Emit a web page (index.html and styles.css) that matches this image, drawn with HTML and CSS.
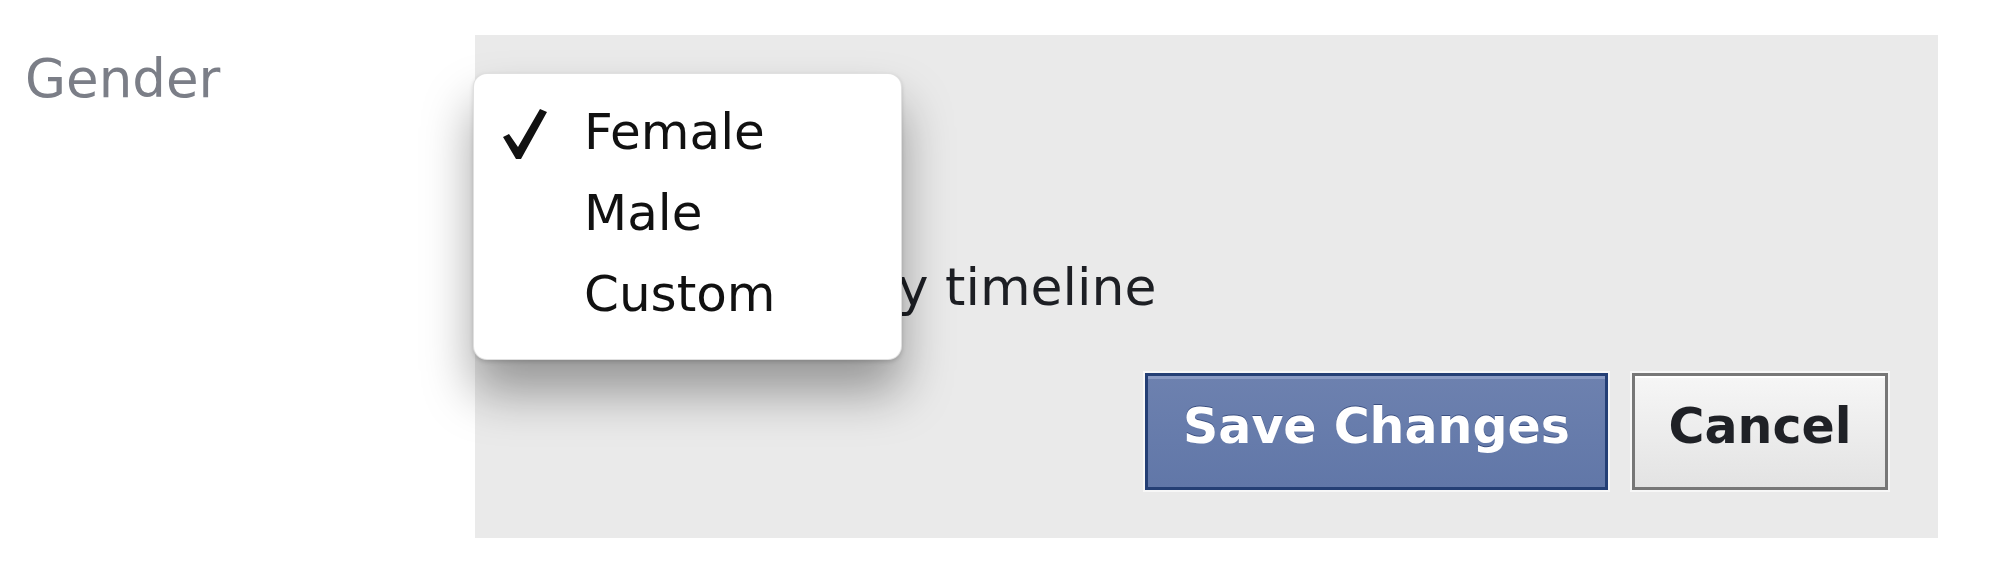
FILE: index.html
```html
<!DOCTYPE html>
<html lang="en">
<head>
<meta charset="utf-8">
<title>Gender</title>
<link rel="stylesheet" href="styles.css">
</head>
<body>
<div class="row">
  <div class="label">Gender</div>
  <div class="panel">
    <div class="select">
      <span class="select-arrows">
        <svg width="14" height="34" viewBox="0 0 14 34"><path d="M7 2 L13 12 L1 12 Z M7 32 L13 22 L1 22 Z" fill="#555"/></svg>
      </span>
    </div>
    <label class="check-row"><span class="checkbox"></span>Show on my timeline</label>
    <div class="actions">
      <button class="btn btn-primary">Save Changes</button>
      <button class="btn btn-default">Cancel</button>
    </div>

    <div class="menu">
      <div class="menu-item selected">
        <span class="tick">
          <svg width="44" height="50" viewBox="0 0 44 50"><path d="M0 28 L6 25 L15 38 L37 0 L44 3 L18 50 L13 50 Z" fill="#111"/></svg>
        </span>Female
      </div>
      <div class="menu-item"><span class="tick"></span>Male</div>
      <div class="menu-item"><span class="tick"></span>Custom</div>
    </div>
  </div>
</div>
</body>
</html>
```

FILE: styles.css
```css
html, body {
  margin: 0;
  padding: 0;
  background: #ffffff;
}

body {
  font-family: "DejaVu Sans", "Liberation Sans", sans-serif;
  width: 2000px;
  height: 571px;
  overflow: hidden;
}

.row {
  display: flex;
  align-items: flex-start;
  padding-top: 35px;
}

.label {
  width: 475px;
  box-sizing: border-box;
  padding-left: 25px;
  padding-top: 14px;
  font-size: 53px;
  line-height: 60px;
  color: #7b7e87;
}

.panel {
  position: relative;
  width: 1463px;
  box-sizing: border-box;
  background: #eaeaea;
  display: flex;
  flex-direction: column;
  padding: 45px 50px 48px 30px;
}

.select {
  width: 370px;
  height: 90px;
  box-sizing: border-box;
  border: 1px solid #a9a9a9;
  border-radius: 8px;
  background: linear-gradient(#ffffff, #ececec);
  display: flex;
  align-items: center;
  justify-content: flex-end;
  padding: 0 26px 0 30px;
}

.select-arrows {
  display: flex;
}

.check-row {
  margin-top: 87px;
  display: flex;
  align-items: center;
  gap: 22px;
  font-size: 52px;
  line-height: 60px;
  color: #1d1f24;
  padding-left: 50px;
}

.checkbox {
  width: 30px;
  height: 30px;
  border: 1px solid #888;
  border-radius: 4px;
  background: #fff;
}

.actions {
  margin-top: 56px;
  display: flex;
  justify-content: flex-end;
  gap: 24px;
}

.btn {
  height: 117px;
  box-sizing: border-box;
  font-family: "DejaVu Sans", "Liberation Sans", sans-serif;
  font-weight: bold;
  font-size: 49px;
  line-height: 100px;
  padding: 0 0 9px 0;
  border-width: 3px;
  border-style: solid;
  border-radius: 0;
  cursor: pointer;
}

.btn-primary {
  width: 463px;
  color: #ffffff;
  background: linear-gradient(#6d81af, #6177a8);
  border-color: #243f75;
  box-shadow: 0 0 0 2px #f7f7f7, inset 0 3px 0 #8a9bc4;
  text-shadow: 0 -1px 0 #3b4f80;
}

.btn-default {
  width: 256px;
  color: #1f2126;
  background: linear-gradient(#f6f6f6, #e3e3e3);
  border-color: #777777;
  box-shadow: 0 0 0 2px #f7f7f7, inset 0 2px 0 #ffffff;
}

.menu {
  position: absolute;
  left: -2px;
  top: 38px;
  width: 429px;
  height: 287px;
  box-sizing: border-box;
  background: #ffffff;
  border-radius: 14px;
  border: 1px solid rgba(0, 0, 0, 0.12);
  box-shadow: 0 32px 50px rgba(0, 0, 0, 0.36), 0 2px 4px rgba(0, 0, 0, 0.15);
  padding-top: 18px;
  font-size: 50px;
  line-height: 81px;
  color: #111;
}

.menu-item {
  display: flex;
  align-items: center;
  height: 81px;
}

.tick {
  width: 110px;
  box-sizing: border-box;
  padding-left: 29px;
  display: flex;
  align-items: center;
  padding-top: 2px;
}
```
